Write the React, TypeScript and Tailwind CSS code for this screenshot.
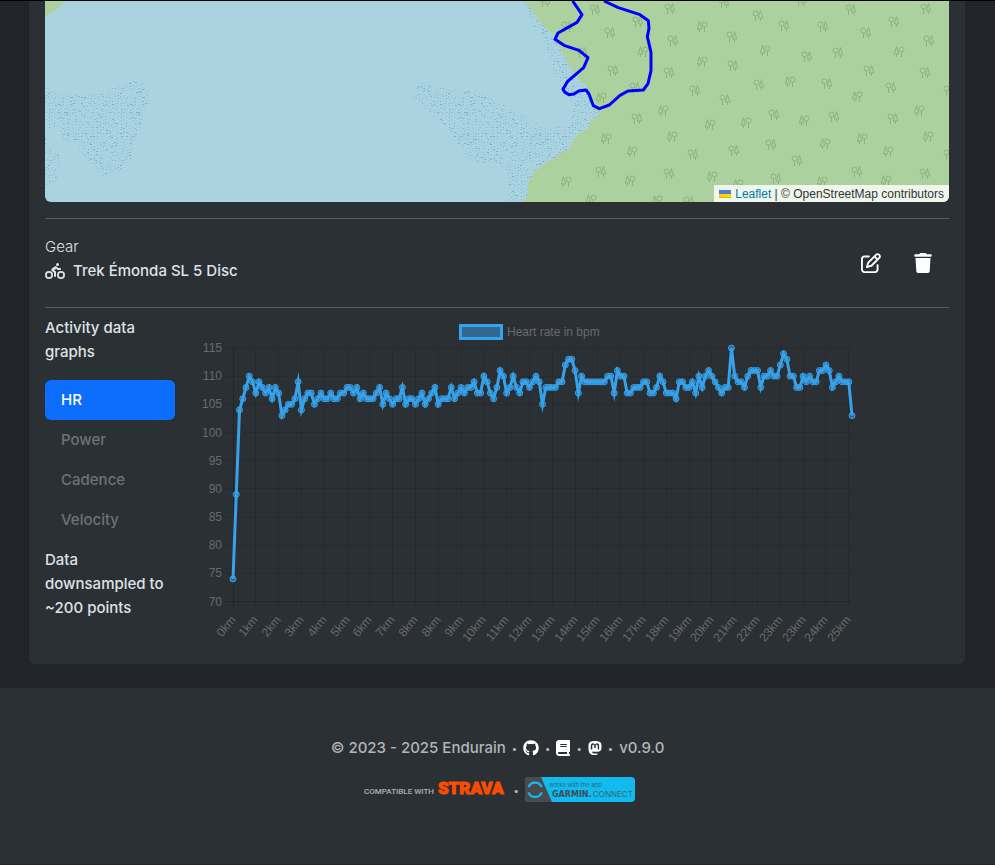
import React from "react";
import {
  FaBook,
  FaGithub,
  FaMastodon,
  FaPersonBiking,
  FaRegPenToSquare,
  FaTrash,
} from "react-icons/fa6";

type Tree = [number, number, "q" | "a"];

// Woodland symbols, in map pixels. "q" has the round tree first, "a" the fir first.
const TREES: Tree[] = [
  [145, 0, "q"], [195, 8, "q"], [167, 25, "q"], [210, 31, "q"], [238, 20, "q"],
  [182, 51, "q"], [243, 50, "a"], [213, 69, "q"], [235, 86, "q"], [201, 96, "a"],
  [295, 89, "q"], [206, 137, "a"], [232, 150, "a"], [293, 153, "q"],
  [201, 170, "q"], [230, 179, "a"], [166, 180, "a"], [191, 198, "a"], [257, 199, "a"],
  [289, 200, "q"], [324, 1, "q"], [401, -1, "q"], [358, 14, "q"], [302, 25, "a"],
  [332, 35, "q"], [384, 24, "q"], [423, 25, "q"], [451, 8, "q"], [494, 20, "q"],
  [526, 7, "q"], [270, 7, "q"], [466, 31, "q"], [529, 39, "q"], [365, 49, "a"],
  [407, 55, "q"], [438, 51, "q"], [499, 50, "a"], [302, 60, "a"], [333, 64, "q"],
  [469, 69, "q"], [525, 71, "q"], [273, 39, "q"], [269, 71, "q"], [359, 83, "q"],
  [390, 80, "a"], [427, 82, "q"], [491, 86, "q"], [325, 98, "q"], [457, 95, "a"],
  [374, 113, "q"], [346, 121, "a"], [310, 123, "a"], [404, 119, "a"], [434, 115, "q"],
  [493, 117, "q"], [519, 109, "a"], [263, 109, "a"], [237, 117, "q"], [272, 135, "a"],
  [528, 135, "a"], [462, 137, "a"], [425, 142, "a"], [371, 143, "q"], [334, 149, "q"],
  [488, 150, "a"], [397, 159, "q"], [549, 89, "q"], [549, 153, "q"], [312, 175, "a"],
  [338, 183, "a"], [376, 177, "q"], [269, 172, "q"], [422, 180, "a"], [457, 170, "q"],
  [486, 179, "a"], [525, 172, "q"],
];

const noise = (n: number) => {
  let h = Math.imul(n ^ 0x9e3779b9, 0x85ebca6b);
  h = Math.imul(h ^ (h >>> 13), 0xc2b2ae35);
  h = Math.imul(h ^ (h >>> 16), 0x27d4eb2f);
  return ((h ^ (h >>> 15)) >>> 0) / 4294967296;
};

// Stipple tile for shallow water: one small dot in each cell, slightly scattered.
const DOTS = Array.from({ length: 576 }, (_, i) => ({
  x: (i % 24) * 9 + Math.floor(noise(i + 1) * 2) * 3,
  y: Math.floor(i / 24) * 9 + ((i % 24) % 2) * 3 + Math.floor(noise(i + 4001) * 2) * 3,
  w: noise(i + 8001) > 0.7 ? 6 : 3,
  dark: noise(i + 12001) > 0.6,
}));

function TreeMark({ x, y, kind }: { x: number; y: number; kind: "q" | "a" }) {
  return (
    <g transform={`translate(${x} ${y}) scale(${kind === "q" ? 1 : -1} 1)`}>
      <circle cx="-2.5" cy="-1.5" r="2.5" />
      <path d="M-2.5 1V6M2.5 -4.5L0.3 3H4.7ZM2.5 3V6" />
    </g>
  );
}

function RouteMap() {
  return (
    <div className="relative h-[201px] overflow-hidden rounded-b-[6px] bg-[#aad3df]">
      <svg
        viewBox="0 0 904 201"
        preserveAspectRatio="xMidYMid slice"
        className="block h-full w-full"
        role="img"
        aria-label="Activity route"
      >
        <defs>
          <pattern id="shallows" width="216" height="216" patternUnits="userSpaceOnUse">
            {DOTS.map((d, i) => (
              <rect
                key={i}
                x={d.x}
                y={d.y}
                width={d.w}
                height="3"
                fill={d.dark ? "#74b4d9" : "#94c6dc"}
              />
            ))}
          </pattern>
        </defs>
        <g transform="translate(-45 -1) scale(0.333333)">
          <path
            fill="url(#shallows)"
            d="M135 262L190 278 240 286 290 282 340 260 400 243 430 248 445 265 445 295 425 370 405 430 388 500 340 512 308 532 260 480 225 425 190 428 178 380 135 387ZM135 385L142 440 185 468 170 545 140 560 140 595 135 595Z"
          />
          <path fill="#add19e" d="M135 3H193Q182 20 165 32L135 48Z" />
        </g>
        <g transform="translate(355 -1) scale(0.333333)">
          <path
            fill="url(#shallows)"
            d="M370 3L385 50 395 75 430 110 450 170 460 225 490 250 495 285 520 310 515 375 440 385 380 350 320 320 270 290 235 275 150 268 60 248 38 265 38 292 100 350 150 390 190 460 220 488 295 490 325 520 328 570 315 606H420L640 342 400 3Z"
          />
          <path
            fill="#add19e"
            d="M370 3L400 35 436 85 455 97 475 135 500 180 520 215 545 245 558 258 570 290 580 325 598 342 570 360 567 388 535 400 515 428 512 445 480 460 460 478 442 482 438 492 410 508 385 545 380 595 360 606H1700V3Z"
          />
        </g>
        <g fill="none" stroke="#8bb37f" strokeWidth="1" transform="translate(355 0)">
          {TREES.map(([x, y, kind], i) => (
            <TreeMark key={i} x={x} y={y} kind={kind} />
          ))}
        </g>
        <path
          transform="translate(355 -1) scale(0.333333)"
          fill="none"
          stroke="#0000ff"
          strokeWidth="9"
          strokeLinejoin="round"
          d="M518 3L546 44 531 67 474 99 465 118 492 136 537 151 564 173 551 203 502 245 489 268 495 277 507 284 522 282 536 273 558 270 567 282 580 317 598 326 628 315 660 286 684 273 730 270 744 251 753 212V157L742 110 747 85 745 62 720 44 655 23 612 3"
        />
      </svg>
      <div className="absolute right-0 bottom-0 flex items-center bg-white/80 px-[5px] pt-px font-['Liberation_Sans',Arial,sans-serif] text-[12px] leading-4 whitespace-pre text-[#333]">
        <svg width="12" height="8" viewBox="0 0 12 8" className="mr-1" aria-hidden="true">
          <path fill="#4c7be1" d="M0 0h12v4H0z" />
          <path fill="#ffd500" d="M0 4h12v3H0z" />
          <path fill="#e0bc00" d="M0 7h12v1H0z" />
        </svg>
        <a href="#leaflet" className="text-[#0078a8]">Leaflet</a>
        <span> | © OpenStreetMap contributors</span>
      </div>
    </div>
  );
}

const HEART_RATE = [
  74, 89, 104, 106, 108, 110, 109, 107, 109, 108, 107, 108, 106, 108, 107, 103, 104, 105, 105, 106,
  109, 104, 106, 107, 107, 105, 106, 107, 106, 106, 107, 106, 106, 107, 107, 108, 108, 107, 108, 106,
  107, 106, 106, 106, 107, 108, 105, 107, 106, 105, 106, 106, 108, 105, 106, 106, 105, 106, 107, 105,
  106, 107, 108, 105, 106, 106, 106, 108, 106, 107, 108, 107, 108, 108, 109, 107, 107, 110, 109, 107,
  106, 108, 111, 110, 107, 108, 110, 108, 107, 109, 109, 108, 109, 110, 109, 105, 108, 108, 108, 108,
  109, 109, 112, 113, 113, 111, 107, 110, 109, 109, 109, 109, 109, 109, 109, 110, 110, 107, 111, 110,
  110, 107, 107, 108, 108, 108, 109, 109, 107, 107, 108, 110, 109, 107, 107, 107, 106, 109, 109, 108,
  108, 109, 107, 110, 108, 110, 111, 110, 109, 108, 107, 108, 108, 115, 110, 109, 109, 108, 110, 111,
  111, 111, 108, 110, 110, 111, 110, 110, 112, 114, 113, 110, 110, 108, 108, 110, 109, 110, 109, 109,
  111, 111, 112, 111, 108, 109, 110, 109, 109, 109, 103,
];

const KM = [
  0, 1, 2, 3, 4, 5, 6, 7, 8, 8, 9, 10, 11, 12, 13, 14, 15, 16, 17, 18, 19, 20, 21, 22, 23, 23, 24, 25,
];

const LEFT = 34;
const RIGHT = 653;
const TOP = 32;
const BOTTOM = 285.5;
const px = (i: number) => LEFT + (i * (RIGHT - LEFT)) / (HEART_RATE.length - 1);
const py = (v: number) => BOTTOM - ((v - 70) * (BOTTOM - TOP)) / 45;

function HeartRateChart() {
  const line = HEART_RATE.map((v, i) => `${px(i).toFixed(2)},${py(v).toFixed(2)}`).join(" ");
  return (
    <svg
      viewBox="0 0 662 332"
      className="block w-full max-w-[662px] font-['Liberation_Sans',Arial,sans-serif] text-[12px]"
      role="img"
      aria-label="Heart rate in bpm"
    >
      <rect x="261.5" y="9.5" width="41" height="13" fill="#36a2eb80" stroke="#36a2eb" strokeWidth="3" />
      <text x="308" y="20" fill="#6a6a6a">Heart rate in bpm</text>
      {[115, 110, 105, 100, 95, 90, 85, 80, 75, 70].map((v) => {
        const y = Math.floor(py(v)) + 0.5;
        return (
          <g key={v}>
            <path d={`M26 ${y}H${RIGHT}`} stroke="#0000001a" />
            <text x="23" y={Math.round(py(v)) + 4} textAnchor="end" fill="#6a6a6a">{v}</text>
          </g>
        );
      })}
      {KM.map((km, i) => {
        const x = Math.floor(px(i * 7)) + 0.5;
        return (
          <g key={i}>
            <path d={`M${x} ${TOP}V293`} stroke="#0000001a" />
            <text transform={`translate(${x + 3} 304) rotate(-50)`} textAnchor="end" fill="#6a6a6a">
              {km}km
            </text>
          </g>
        );
      })}
      <path d={`M${LEFT + 0.5} ${TOP}V293M26 285.5H${RIGHT}`} stroke="#0000001a" />
      <polyline points={line} fill="none" stroke="#36a2eb" strokeWidth="3" strokeMiterlimit="10" />
      <g fill="#36a2eb80" stroke="#36a2eb">
        {HEART_RATE.map((v, i) => (
          <circle key={i} cx={px(i)} cy={py(v)} r="3" />
        ))}
      </g>
    </svg>
  );
}

function StravaBadge() {
  return (
    <a href="#strava" className="flex items-baseline gap-1" aria-label="Compatible with Strava">
      <span className="font-['Roboto',sans-serif] text-[8px] font-medium text-[#adb1b5]">
        COMPATIBLE WITH
      </span>
      <span className="pt-px font-['Roboto',sans-serif] text-[17px] leading-6 font-black text-[#fc4c02] [-webkit-text-stroke:1px_#fc4c02]">
        STRAVA
      </span>
    </a>
  );
}

function GarminBadge() {
  return (
    <a href="#garmin" aria-label="Works with the app Garmin Connect">
      <svg width="110" height="25" viewBox="0 0 110 25" className="block">
        <defs>
          <clipPath id="badge">
            <rect width="110" height="25" rx="4" />
          </clipPath>
        </defs>
        <g clipPath="url(#badge)">
          <path fill="#11bbee" d="M0 0h110v25H0z" />
          <path fill="#4a4a4c" d="M0 0h16l11 25H0z" />
        </g>
        <path
          fill="none"
          stroke="#11bbee"
          strokeWidth="2.2"
          d="M3.4 10.2A7.2 7.2 0 0 1 16.8 10.2M3.4 15.4A7.2 7.2 0 0 0 16.8 15.4"
        />
        <g fill="#3c4c55">
          <text x="24" y="10" className="font-['Inter',sans-serif] text-[6px] font-light">works with the app</text>
          <text x="27" y="20" className="font-['DejaVu_Sans',sans-serif] text-[8px] font-bold">GARMIN.</text>
          <text x="68" y="20" className="font-['Inter',sans-serif] text-[8px] font-light">CONNECT</text>
        </g>
      </svg>
    </a>
  );
}

function Bullet() {
  return <span className="text-[10px]">•</span>;
}

export default function App() {
  return (
    <div className="min-h-screen border-t border-black bg-[#212529] font-['Inter',sans-serif] text-[15px] leading-6 font-medium text-[#dee2e6]">
      <main className="pr-[30px] pb-6 pl-[29px]">
        <section className="rounded-b-[6px] bg-[#2b3035] px-4 pb-4">
          <RouteMap />
          <hr className="mt-4 border-[#585d61]" />
          <div className="flex items-center justify-between py-4">
            <div className="pb-2">
              <div className="font-light">Gear</div>
              <div className="flex items-center gap-2">
                <FaPersonBiking className="h-4 w-5" />
                <span>Trek Émonda SL 5 Disc</span>
              </div>
            </div>
            <div className="flex items-center gap-8 pr-4 text-white">
              <button type="button" aria-label="Edit gear">
                <FaRegPenToSquare className="size-5" />
              </button>
              <button type="button" aria-label="Remove gear">
                <FaTrash className="size-5" />
              </button>
            </div>
          </div>
          <hr className="border-[#585d61]" />
          <div className="flex gap-6 pt-2">
            <div className="w-[130px] shrink-0">
              <p>Activity data graphs</p>
              <nav className="mt-4 mb-2 flex flex-col">
                <button type="button" className="h-10 rounded-[6px] bg-[#0d6efd] px-4 text-left text-white">
                  HR
                </button>
                {["Power", "Cadence", "Velocity"].map((name) => (
                  <button key={name} type="button" className="h-10 px-4 text-left text-[#6d7277]">
                    {name}
                  </button>
                ))}
              </nav>
              <p>Data downsampled to ~200 points</p>
            </div>
            <div className="min-w-0 flex-1">
              <HeartRateChart />
            </div>
          </div>
        </section>
      </main>
      <footer className="bg-[#2b3035] py-12 text-[#b1b5ba]">
        <div className="flex items-center justify-center gap-[6px]">
          <span>© 2023 - 2025 Endurain</span>
          <Bullet />
          <a href="#github" aria-label="GitHub" className="text-white"><FaGithub className="size-4" /></a>
          <Bullet />
          <a href="#docs" aria-label="Documentation" className="text-white"><FaBook className="h-4 w-[14px]" /></a>
          <Bullet />
          <a href="#mastodon" aria-label="Mastodon" className="text-white"><FaMastodon className="h-4 w-[14px]" /></a>
          <Bullet />
          <span>v0.9.0</span>
        </div>
        <div className="mt-[15px] flex items-center justify-center gap-[6px] pb-3 pl-1">
          <StravaBadge />
          <span className="flex pl-1"><Bullet /></span>
          <GarminBadge />
        </div>
      </footer>
    </div>
  );
}
